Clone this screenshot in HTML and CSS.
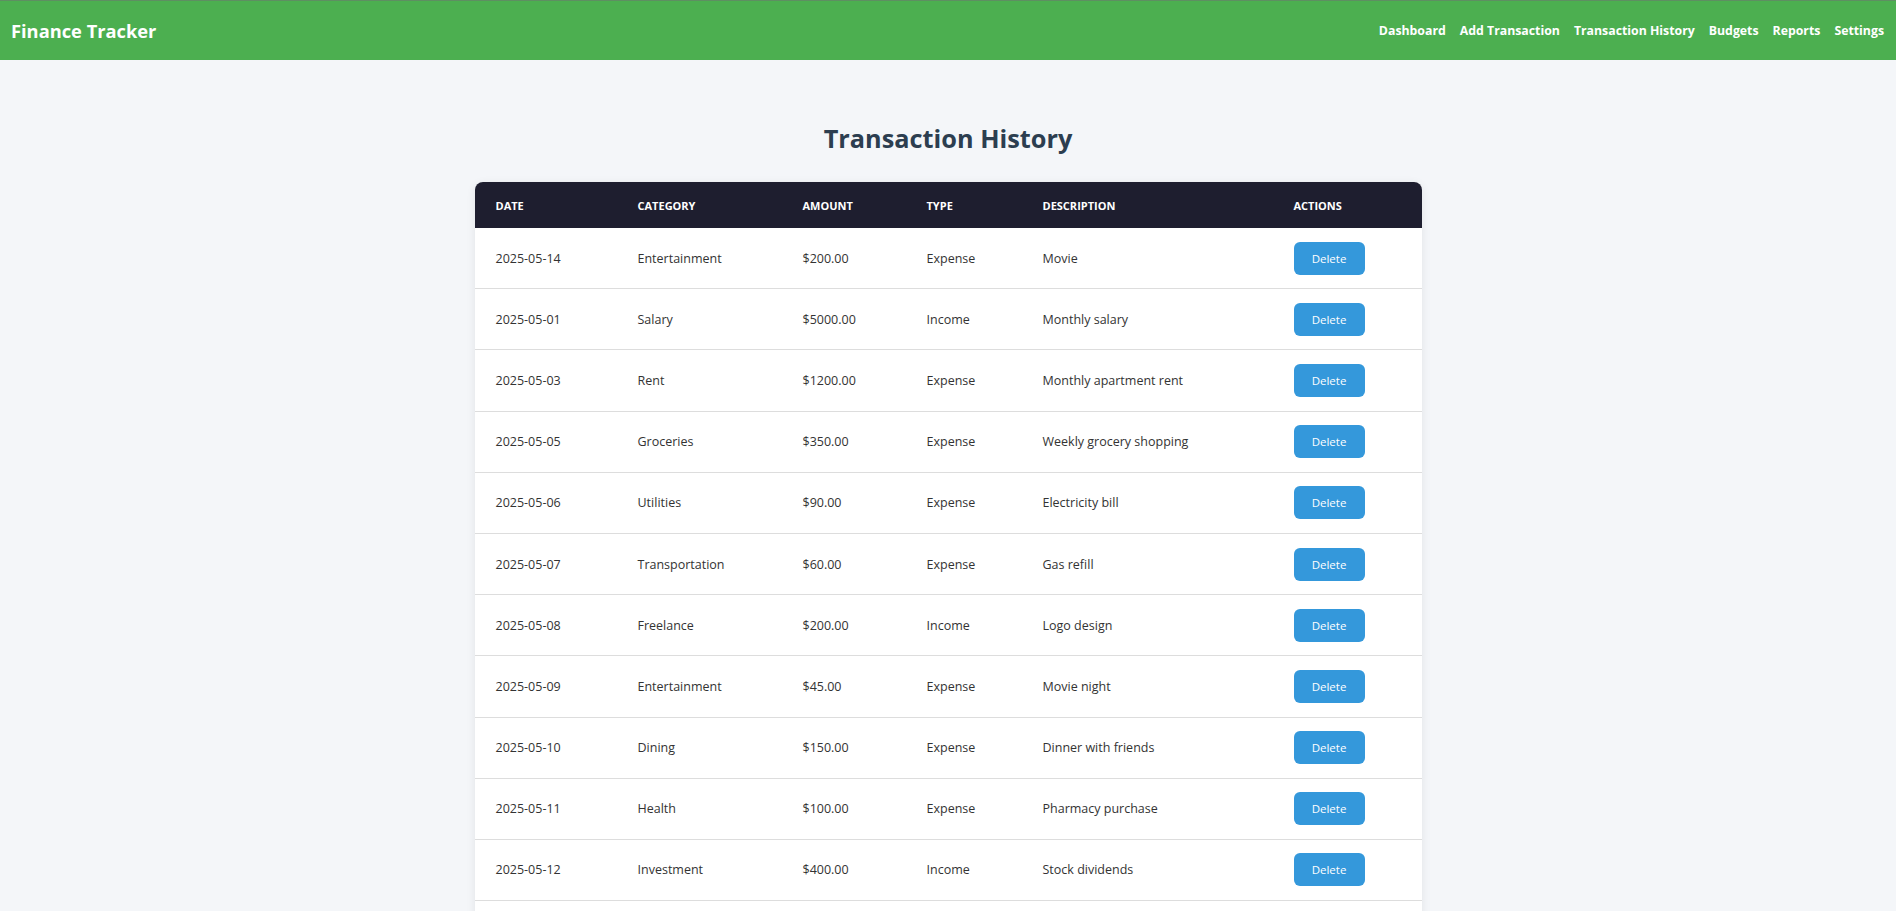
FILE: index.html
```html
<!DOCTYPE html>
<html lang="en">
<head>
<meta charset="UTF-8">
<title>Transaction History - Finance Tracker</title>
<link rel="stylesheet" href="styles.css">
</head>
<body>
<header class="topbar">
  <div class="brand">Finance Tracker</div>
  <nav class="nav">
    <a href="#">Dashboard</a>
    <a href="#">Add Transaction</a>
    <a href="#">Transaction History</a>
    <a href="#">Budgets</a>
    <a href="#">Reports</a>
    <a href="#">Settings</a>
  </nav>
</header>
<main class="content">
  <h2 class="title">Transaction History</h2>
  <div class="card">
    <table class="tx">
      <colgroup>
        <col class="c-date"><col class="c-cat"><col class="c-amt"><col class="c-type"><col class="c-desc"><col class="c-act">
      </colgroup>
      <thead>
        <tr><th>Date</th><th>Category</th><th>Amount</th><th>Type</th><th>Description</th><th>Actions</th></tr>
      </thead>
      <tbody>
        <tr><td>2025-05-14</td><td>Entertainment</td><td>$200.00</td><td>Expense</td><td>Movie</td><td><button class="del">Delete</button></td></tr>
        <tr><td>2025-05-01</td><td>Salary</td><td>$5000.00</td><td>Income</td><td>Monthly salary</td><td><button class="del">Delete</button></td></tr>
        <tr><td>2025-05-03</td><td>Rent</td><td>$1200.00</td><td>Expense</td><td>Monthly apartment rent</td><td><button class="del">Delete</button></td></tr>
        <tr><td>2025-05-05</td><td>Groceries</td><td>$350.00</td><td>Expense</td><td>Weekly grocery shopping</td><td><button class="del">Delete</button></td></tr>
        <tr><td>2025-05-06</td><td>Utilities</td><td>$90.00</td><td>Expense</td><td>Electricity bill</td><td><button class="del">Delete</button></td></tr>
        <tr><td>2025-05-07</td><td>Transportation</td><td>$60.00</td><td>Expense</td><td>Gas refill</td><td><button class="del">Delete</button></td></tr>
        <tr><td>2025-05-08</td><td>Freelance</td><td>$200.00</td><td>Income</td><td>Logo design</td><td><button class="del">Delete</button></td></tr>
        <tr><td>2025-05-09</td><td>Entertainment</td><td>$45.00</td><td>Expense</td><td>Movie night</td><td><button class="del">Delete</button></td></tr>
        <tr><td>2025-05-10</td><td>Dining</td><td>$150.00</td><td>Expense</td><td>Dinner with friends</td><td><button class="del">Delete</button></td></tr>
        <tr><td>2025-05-11</td><td>Health</td><td>$100.00</td><td>Expense</td><td>Pharmacy purchase</td><td><button class="del">Delete</button></td></tr>
        <tr><td>2025-05-12</td><td>Investment</td><td>$400.00</td><td>Income</td><td>Stock dividends</td><td><button class="del">Delete</button></td></tr>
        <tr><td>2025-05-13</td><td>Shopping</td><td>$80.00</td><td>Expense</td><td>New shoes</td><td><button class="del">Delete</button></td></tr>
      </tbody>
    </table>
  </div>
</main>
</body>
</html>
```

FILE: styles.css
```css
* { box-sizing: border-box; }

body {
  margin: 0;
  background: #f4f6f9;
  font-family: "Open Sans", "Noto Sans", "DejaVu Sans", sans-serif;
  color: #333;
}

.topbar {
  height: 60px;
  background: #4caf50;
  border-top: 1px solid #5e8f62;
  display: flex;
  align-items: center;
  justify-content: space-between;
  padding: 0 12px 0 11px;
}

.brand {
  color: #fff;
  font-size: 18.3px;
  font-weight: 700;
}

.nav {
  display: flex;
  gap: 14px;
}

.nav a {
  color: #fff;
  text-decoration: none;
  font-size: 12.3px;
  font-weight: 700;
}

.content {
  display: flex;
  flex-direction: column;
  align-items: center;
  padding-top: 61px;
}

.title {
  margin: 0 0 27px;
  font-size: 25.3px;
  line-height: 34px;
  font-weight: 700;
  color: #2c3e50;
}

.card {
  width: 947px;
  background: #fff;
  border-radius: 8px;
  overflow: hidden;
  box-shadow: 0 2px 10px rgba(0, 0, 0, 0.08);
}

.tx {
  width: 100%;
  border-collapse: collapse;
  table-layout: fixed;
}

.c-date { width: 142px; }
.c-cat { width: 165px; }
.c-amt { width: 124px; }
.c-type { width: 116px; }
.c-desc { width: 251px; }
.c-act { width: 149px; }

.tx th {
  background: #1e1e2f;
  color: #fff;
  text-align: left;
  text-transform: uppercase;
  font-size: 11px;
  font-weight: 700;
  height: 46px;
  padding: 0 0 0 21px;
}

.tx td {
  font-size: 12.5px;
  color: #333;
  padding: 13.6px 0 13.6px 21px;
  border-bottom: 1px solid #ddd;
  vertical-align: middle;
  line-height: 19px;
}

.del {
  background: #3498db;
  color: #fff;
  border: none;
  border-radius: 6px;
  width: 71px;
  height: 33px;
  font-family: inherit;
  font-size: 11.5px;
  padding: 0;
  cursor: pointer;
}
```
